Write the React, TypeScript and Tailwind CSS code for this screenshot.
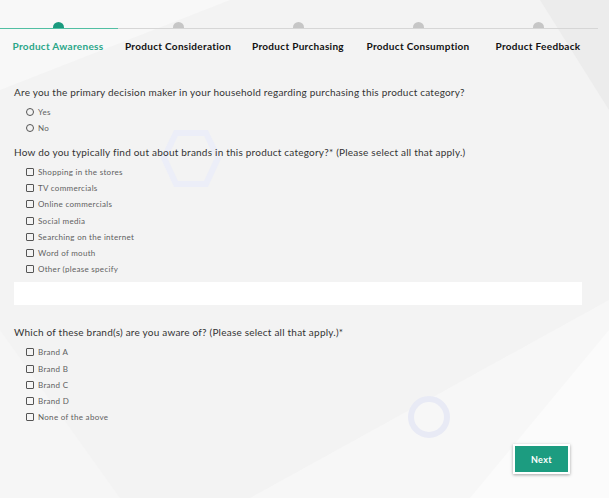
import React from "react";

const steps = [
  "Product Awareness",
  "Product Consideration",
  "Product Purchasing",
  "Product Consumption",
  "Product Feedback",
];

const sources = [
  "Shopping in the stores",
  "TV commercials",
  "Online commercials",
  "Social media",
  "Searching on the internet",
  "Word of mouth",
  "Other (please specify",
];

const brands = ["Brand A", "Brand B", "Brand C", "Brand D", "None of the above"];

function Radio({ label }: { label: string }) {
  return (
    <div className="flex items-center h-[16px]">
      <span className="w-[8px] h-[8px] rounded-full border border-[#555] ml-[12px] mr-[4px]" />
      <span className="text-[8px] tracking-[0.3px] text-[#5f5f5f]">{label}</span>
    </div>
  );
}

function Check({ label }: { label: string }) {
  return (
    <div className="flex items-center h-[16.2px]">
      <span className="w-[8px] h-[8px] rounded-[1px] border border-[#555] ml-[12px] mr-[4px]" />
      <span className="text-[8px] tracking-[0.3px] text-[#5f5f5f]">{label}</span>
    </div>
  );
}

export default function App() {
  return (
    <div className="relative w-[609px] h-[498px] overflow-hidden bg-[#f3f3f3] font-['Lato',sans-serif]">
      <svg className="absolute inset-0" width="609" height="498" viewBox="0 0 609 498">
        <polygon points="0,0 230,0 0,90" fill="#f8f8f8" />
        <polygon points="540,0 609,0 609,110" fill="#ececec" />
        <polygon points="250,498 609,300 609,498" fill="#f7f7f7" />
        <polygon points="470,498 609,330 609,498" fill="#fbfbfb" />
        <polygon points="0,330 120,498 0,498" fill="#f6f6f6" />
        <polygon
          points="176,133 206,133 218,158 206,184 176,184 164,158"
          fill="none"
          stroke="#eceef8"
          strokeWidth="6"
        />
        <circle cx="429" cy="417" r="18" fill="none" stroke="#e8eaf5" strokeWidth="6" />
      </svg>

      <div className="relative">
        <div className="flex pt-[22px] ml-[-2px]">
          {steps.map((s, i) => (
            <div key={s} className="w-[120px] flex flex-col items-center">
              <div
                className={
                  "w-full h-[7px] flex justify-center border-b " +
                  (i === 0 ? "border-[#52bfa3]" : "border-[#d6d6d6]")
                }
              >
                <span
                  className={
                    "w-[11px] h-[6px] rounded-t-full " +
                    (i === 0 ? "bg-[#1a9a7e]" : "bg-[#c6c6c6]")
                  }
                />
              </div>
              <div
                className={
                  "mt-[10px] text-[10px] leading-[14px] font-bold tracking-[0.3px] whitespace-nowrap " +
                  (i === 0 ? "text-[#2aa688]" : "text-[#111]")
                }
              >
                {s}
              </div>
            </div>
          ))}
        </div>

        <div className="px-[14px]">
          <div className="mt-[32px] text-[10px] leading-[14px] tracking-[0.22px] text-[#333]">
            Are you the primary decision maker in your household regarding purchasing this product category?
          </div>
          <div className="mt-[5px]">
            <Radio label="Yes" />
            <Radio label="No" />
          </div>

          <div className="mt-[9px] text-[10px] leading-[14px] tracking-[0.22px] text-[#333]">
            How do you typically find out about brands in this product category?* (Please select all that apply.)
          </div>
          <div className="mt-[5px]">
            {sources.map((s) => (
              <Check key={s} label={s} />
            ))}
          </div>
          <div className="mt-[5px] w-[568px] h-[23px] bg-white" />

          <div className="mt-[20px] text-[10px] leading-[14px] tracking-[0.22px] text-[#333]">
            Which of these brand(s) are you aware of? (Please select all that apply.)*
          </div>
          <div className="mt-[5px]">
            {brands.map((s) => (
              <Check key={s} label={s} />
            ))}
          </div>

          <div className="flex justify-end pr-[25px] mt-[19px]">
            <button className="w-[57px] h-[30px] bg-[#1c9c80] border-2 border-white shadow-[0_1px_3px_rgba(0,0,0,0.35)] text-white text-[9px] font-bold tracking-[0.4px]">
              Next
            </button>
          </div>
        </div>
      </div>
    </div>
  );
}
